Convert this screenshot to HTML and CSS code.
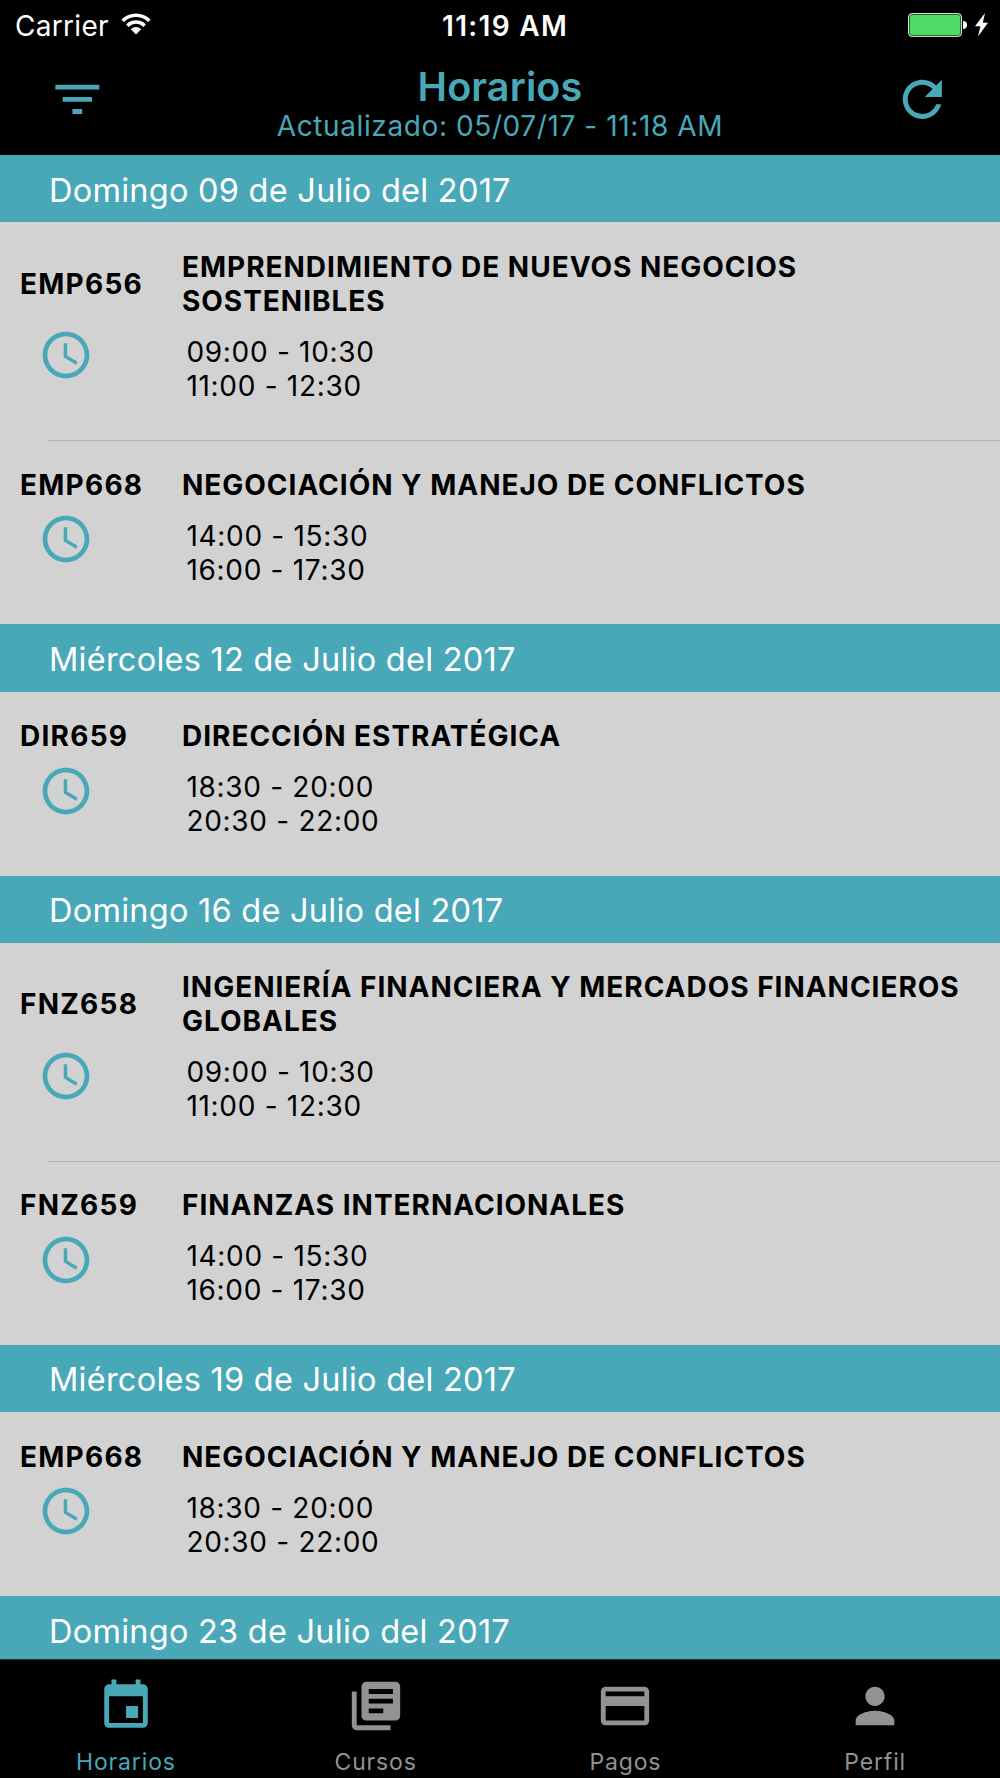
FILE: index.html
```html
<!DOCTYPE html>
<html lang="es">
<head>
    <meta charset="UTF-8">
    <meta name="viewport" content="width=device-width, initial-scale=1.0">
    <title>Horarios</title>
    <link rel="stylesheet" href="styles.css">
</head>
<body>
    <svg class="sprite" aria-hidden="true">
        <symbol id="clock" viewBox="0 0 24 24">
            <path d="M11.99 2C6.47 2 2 6.48 2 12s4.47 10 9.99 10C17.52 22 22 17.52 22 12S17.52 2 11.99 2zM12 20c-4.42 0-8-3.58-8-8s3.58-8 8-8 8 3.58 8 8-3.58 8-8 8zm.5-13H11v6l5.25 3.15.75-1.23-4.5-2.67z"/>
        </symbol>
    </svg>

    <div class="app">
        <header class="header">
            <div class="status-bar">
                <div class="carrier">
                    <span>Carrier</span>
                    <svg class="wifi" viewBox="0 0 30 22">
                        <path d="M0.4 6.6A20.6 20.6 0 0 1 29.6 6.6L27.1 9.1A17 17 0 0 0 2.9 9.1Z"/>
                        <path d="M5.1 11.4A14 14 0 0 1 24.9 11.4L22.4 13.9A10.4 10.4 0 0 0 7.6 13.9Z"/>
                        <path d="M9.8 16.2A7.3 7.3 0 0 1 20.2 16.2L15 21.6Z"/>
                    </svg>
                </div>
                <div class="time">11:19 AM</div>
                <div class="power">
                    <div class="battery"></div>
                    <div class="battery-tip"></div>
                    <svg class="bolt" viewBox="0 0 13 24"><path d="M10 0L0 13.2H5.4L3 23.6L13 9.8H7.8Z"/></svg>
                </div>
            </div>
            <div class="nav-bar">
                <svg class="nav-icon" viewBox="0 0 24 24"><path d="M10 18h4v-2h-4v2zM3 6v2h18V6H3zm3 7h12v-2H6v2z"/></svg>
                <div class="titles">
                    <h1>Horarios</h1>
                    <p>Actualizado: 05/07/17 - 11:18 AM</p>
                </div>
                <svg class="nav-icon" viewBox="0 0 24 24"><path d="M17.65 6.35C16.2 4.9 14.21 4 12 4c-4.42 0-7.99 3.58-7.99 8s3.57 8 7.99 8c3.73 0 6.84-2.55 7.73-6h-2.08c-.82 2.33-3.04 4-5.65 4-3.31 0-6-2.69-6-6s2.69-6 6-6c1.66 0 3.14.69 4.22 1.78L13 11h7V4l-2.35 2.35z"/></svg>
            </div>
        </header>

        <main class="schedule">
            <h2 class="date">Domingo 09 de Julio del 2017</h2>
            <div class="course">
                <div class="code">EMP656</div>
                <div class="name">EMPRENDIMIENTO DE NUEVOS NEGOCIOS SOSTENIBLES</div>
                <svg class="clock"><use href="#clock"/></svg>
                <div class="hours">09:00 - 10:30<br>11:00 - 12:30</div>
            </div>
            <hr class="divider">
            <div class="course">
                <div class="code">EMP668</div>
                <div class="name">NEGOCIACIÓN Y MANEJO DE CONFLICTOS</div>
                <svg class="clock"><use href="#clock"/></svg>
                <div class="hours">14:00 - 15:30<br>16:00 - 17:30</div>
            </div>

            <h2 class="date">Miércoles 12 de Julio del 2017</h2>
            <div class="course">
                <div class="code">DIR659</div>
                <div class="name">DIRECCIÓN ESTRATÉGICA</div>
                <svg class="clock"><use href="#clock"/></svg>
                <div class="hours">18:30 - 20:00<br>20:30 - 22:00</div>
            </div>

            <h2 class="date">Domingo 16 de Julio del 2017</h2>
            <div class="course">
                <div class="code">FNZ658</div>
                <div class="name">INGENIERÍA FINANCIERA Y MERCADOS FINANCIEROS GLOBALES</div>
                <svg class="clock"><use href="#clock"/></svg>
                <div class="hours">09:00 - 10:30<br>11:00 - 12:30</div>
            </div>
            <hr class="divider">
            <div class="course">
                <div class="code">FNZ659</div>
                <div class="name">FINANZAS INTERNACIONALES</div>
                <svg class="clock"><use href="#clock"/></svg>
                <div class="hours">14:00 - 15:30<br>16:00 - 17:30</div>
            </div>

            <h2 class="date">Miércoles 19 de Julio del 2017</h2>
            <div class="course">
                <div class="code">EMP668</div>
                <div class="name">NEGOCIACIÓN Y MANEJO DE CONFLICTOS</div>
                <svg class="clock"><use href="#clock"/></svg>
                <div class="hours">18:30 - 20:00<br>20:30 - 22:00</div>
            </div>

            <h2 class="date">Domingo 23 de Julio del 2017</h2>
        </main>

        <nav class="tabs">
            <a class="tab active">
                <svg viewBox="0 0 24 24"><path d="M17 12h-5v5h5v-5zM16 1v2H8V1H6v2H5c-1.11 0-1.99.9-1.99 2L3 19c0 1.1.89 2 2 2h14c1.1 0 2-.9 2-2V5c0-1.1-.9-2-2-2h-1V1h-2zm3 18H5V8h14v11z"/></svg>
                <span>Horarios</span>
            </a>
            <a class="tab">
                <svg viewBox="0 0 24 24"><path d="M4 6H2v14c0 1.1.9 2 2 2h14v-2H4V6zm16-4H8c-1.1 0-2 .9-2 2v12c0 1.1.9 2 2 2h12c1.1 0 2-.9 2-2V4c0-1.1-.9-2-2-2zm-1 9H9V9h10v2zm-4 4H9v-2h6v2zm4-8H9V5h10v2z"/></svg>
                <span>Cursos</span>
            </a>
            <a class="tab">
                <svg viewBox="0 0 24 24"><path d="M20 4H4c-1.11 0-1.99.89-1.99 2L2 18c0 1.11.89 2 2 2h16c1.11 0 2-.89 2-2V6c0-1.11-.89-2-2-2zm0 14H4v-6h16v6zm0-10H4V6h16v2z"/></svg>
                <span>Pagos</span>
            </a>
            <a class="tab">
                <svg viewBox="0 0 24 24"><path d="M12 12c2.21 0 4-1.79 4-4s-1.79-4-4-4-4 1.79-4 4 1.79 4 4 4zm0 2c-2.67 0-8 1.34-8 4v2h16v-2c0-2.66-5.33-4-8-4z"/></svg>
                <span>Perfil</span>
            </a>
        </nav>
    </div>
</body>
</html>
```
FILE: styles.css
```css
* {
    box-sizing: border-box;
}
body {
    margin: 0;
    background: #000;
    font-family: Inter, "Liberation Sans", sans-serif;
    font-size: 28px;
    line-height: 34px;
}
h1, h2, p {
    margin: 0;
    font-weight: 400;
}
svg {
    display: block;
    fill: currentColor;
}
.sprite {
    display: none;
}
.app {
    display: flex;
    flex-direction: column;
    height: 1778px;
    overflow: hidden;
}

/* header */
.header {
    flex: none;
    height: 155px;
    background: #000;
    color: #48a8b7;
}
.status-bar {
    display: grid;
    grid-template-columns: 427px 150px 1fr;
    align-items: center;
    height: 50px;
    padding: 2px 12px 0 15px;
    color: #fff;
}
.carrier {
    display: flex;
    align-items: center;
    gap: 12px;
    letter-spacing: 0.3px;
}
.wifi {
    width: 30px;
    height: 22px;
    margin-top: -4px;
}
.time {
    font-weight: 600;
    letter-spacing: 1.3px;
}
.power {
    display: flex;
    align-items: center;
    justify-content: flex-end;
    margin-top: -2px;
}
.battery {
    width: 54px;
    height: 24px;
    border: 1px solid #d5d5d5;
    border-radius: 4px;
    background: #4fdb67;
    box-shadow: inset 0 0 0 1px #1c6b2a;
}
.battery-tip {
    width: 4px;
    height: 8px;
    margin: 0 8px 0 1px;
    border-radius: 0 4px 4px 0;
    background: #fff;
}
.bolt {
    width: 13px;
    height: 24px;
}
.nav-bar {
    display: flex;
    justify-content: space-between;
    align-items: flex-start;
    padding: 15px 48px 0;
}
.nav-icon {
    width: 58.67px;
    height: 58.67px;
    margin-top: 5px;
}
.titles {
    text-align: center;
}
.titles h1 {
    font-size: 39.5px;
    font-weight: 600;
    line-height: 44px;
    letter-spacing: 0.15px;
}
.titles p {
    letter-spacing: 0.6px;
}

/* schedule list */
.schedule {
    flex: 1;
    min-height: 0;
    overflow: hidden;
    background: #d2d2d2;
    color: #000;
}
.date {
    height: 67.3px;
    padding: 1.5px 49px 0;
    background: #48a8b7;
    color: #fff;
    font-size: 32.5px;
    line-height: 67px;
    letter-spacing: 0.25px;
}
.course {
    display: grid;
    grid-template-columns: 162px 1fr;
    align-items: center;
    padding: 27.6px 18px 37.5px 20px;
}
.code {
    font-weight: 700;
    letter-spacing: 1.25px;
}
.name {
    font-weight: 700;
    letter-spacing: 0.98px;
}
.clock {
    width: 56px;
    height: 56px;
    margin: 9.6px 0 0 18.3px;
    align-self: start;
    color: #48a8b7;
}
.hours {
    padding: 16.9px 0 0 4.4px;
    letter-spacing: 0.7px;
}
.divider {
    height: 1px;
    margin: 0 0 -1px 48px;
    border: 0;
    background: #b2b2b2;
}

/* bottom tabs */
.tabs {
    flex: none;
    display: flex;
    height: 119px;
    border-top: 1px solid #163338;
    background: #000;
    color: #929292;
}
.tab {
    flex: 1;
    display: flex;
    flex-direction: column;
    align-items: center;
    gap: 13px;
    padding-top: 17px;
    font-size: 23px;
    line-height: 28px;
    letter-spacing: 0.85px;
}
.tab svg {
    width: 58px;
    height: 58px;
}
.tab.active {
    padding-left: 1px;
    color: #48a8b7;
}
```
